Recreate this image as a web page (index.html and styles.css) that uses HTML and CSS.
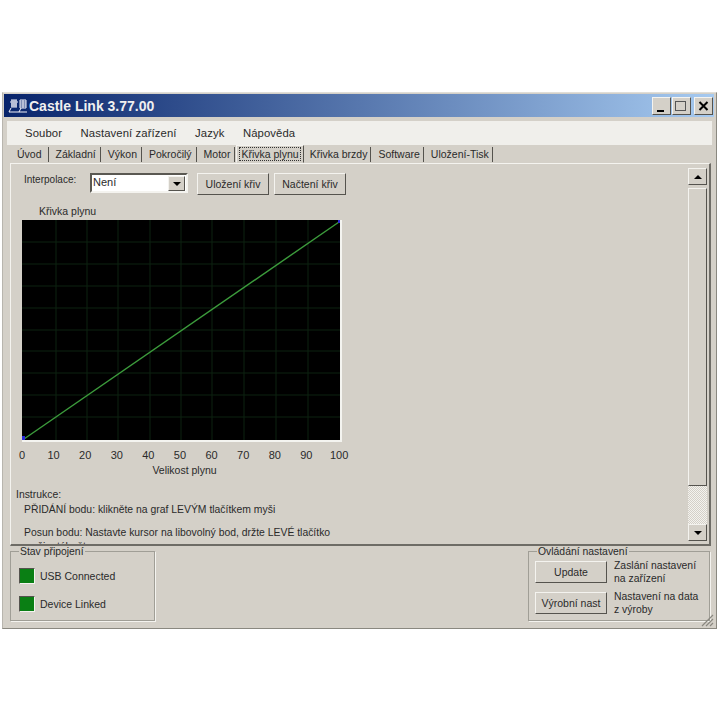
FILE: index.html
```html
<!DOCTYPE html>
<html>
<head>
    <title>Castle Link 3.77.00</title>
    <meta charset="UTF-8">
    <link rel="stylesheet" href="styles.css">
</head>
<body>
    <div class="window">
        <div class="titlebar">
            <svg class="app-icon" width="20" height="16" viewBox="0 0 20 16">
                <path d="M3 2h6M2 4h8M3 6h6M3 8h6M4 2v8M6 2v8M8 2v8M3 10L1 14M12 2h6v8h-6zM12 4h6M12 6h6M12 8h6M15 2v8M13 10l-2 4M1 14h18" stroke="#f2f2fa" stroke-width="1" fill="none"/>
            </svg>
            <span class="title-text">Castle Link 3.77.00</span>
            <div class="title-buttons">
                <button class="cap-btn"><span class="cap-min"></span></button>
                <button class="cap-btn"><span class="cap-max"></span></button>
                <button class="cap-btn">
                    <svg class="cap-x" width="11" height="10" viewBox="0 0 11 10">
                        <path d="M1.5 1l8 8M9.5 1l-8 8" stroke="#000" stroke-width="2" fill="none"/>
                    </svg>
                </button>
            </div>
        </div>

        <div class="menubar">
            <span class="menu-item">Soubor</span>
            <span class="menu-item">Nastavení zařízení</span>
            <span class="menu-item">Jazyk</span>
            <span class="menu-item">Nápověda</span>
        </div>

        <div class="tabs">
            <span class="tab">Úvod</span>
            <span class="tab">Základní</span>
            <span class="tab">Výkon</span>
            <span class="tab">Pokročilý</span>
            <span class="tab">Motor</span>
            <span class="tab active"><span class="tab-focus">Křivka plynu</span></span>
            <span class="tab">Křivka brzdy</span>
            <span class="tab">Software</span>
            <span class="tab">Uložení-Tisk</span>
        </div>

        <div class="panel">
            <div class="content">
                <div class="toolbar">
                    <span class="interp-label">Interpolace:</span>
                    <div class="combo">
                        <span class="combo-value">Není</span>
                        <span class="combo-arrow"><span class="arrow-down"></span></span>
                    </div>
                    <button class="btn tool-btn">Uložení křiv</button>
                    <button class="btn tool-btn">Načtení křiv</button>
                </div>

                <div class="chart-title">Křivka plynu</div>
                <svg class="chart" width="320" height="222" viewBox="0 0 320 222">
                    <rect width="320" height="222" fill="#000"/>
                    <path d="M34 0v220M65 0v220M96 0v220M128 0v220M159 0v220M190 0v220M222 0v220M254 0v220M286 0v220" stroke="#0c2210" fill="none"/>
                    <path d="M0 22h318M0 44h318M0 66h318M0 88h318M0 110h318M0 131h318M0 153h318M0 175h318M0 197h318" stroke="#0c2210" fill="none"/>
                    <path d="M2 219L317 2" stroke="#3c9c3c" stroke-width="1.4" fill="none"/>
                    <rect x="0" y="216" width="3" height="4" fill="#2a2ad8"/>
                    <rect x="316" y="0" width="3" height="3" fill="#2a2ad8"/>
                    <path d="M319 0V221H0" stroke="#f4f4f0" stroke-width="2" fill="none"/>
                </svg>
                <div class="axis">
                    <span>0</span><span>10</span><span>20</span><span>30</span><span>40</span><span>50</span><span>60</span><span>70</span><span>80</span><span>90</span><span>100</span>
                </div>
                <div class="axis-title">Velikost plynu</div>

                <div class="instructions">
                    <div class="instr-head">Instrukce:</div>
                    <div class="instr-line">PŘIDÁNÍ bodu: klikněte na graf LEVÝM tlačítkem myši</div>
                    <div class="instr-line instr-second">Posun bodu: Nastavte kursor na libovolný bod, držte LEVÉ tlačítko</div>
                    <div class="instr-line instr-cut">myši a táhněte</div>
                </div>
            </div>

            <div class="scrollbar">
                <button class="scroll-btn"><span class="arrow-up"></span></button>
                <div class="scroll-thumb"></div>
                <div class="scroll-track"></div>
                <button class="scroll-btn"><span class="arrow-down"></span></button>
            </div>
        </div>

        <div class="statusbar">
            <fieldset class="group group-status">
                <legend>Stav připojení</legend>
                <div class="led-row"><span class="led"></span>USB Connected</div>
                <div class="led-row"><span class="led"></span>Device Linked</div>
            </fieldset>

            <fieldset class="group group-settings">
                <legend>Ovládání nastavení</legend>
                <div class="set-row">
                    <button class="btn set-btn">Update</button>
                    <span class="set-text">Zaslání nastavení<br>na zařízení</span>
                </div>
                <div class="set-row">
                    <button class="btn set-btn">Výrobní nast</button>
                    <span class="set-text">Nastavení na data<br>z výroby</span>
                </div>
            </fieldset>
            <svg class="grip" width="14" height="14" viewBox="0 0 14 14">
                <path d="M13 2L2 13M13 6L6 13M13 10L10 13" stroke="#8a8880" stroke-width="1.2" fill="none"/>
            </svg>
        </div>
    </div>
</body>
</html>
```

FILE: styles.css
```css
:root {
    --face: #d4d0c8;
    --dark: #6e6c66;
    --light: #f4f3ef;
    --shadow: #55534e;
    --text: #2a2a2a;
}

* {
    margin: 0;
    padding: 0;
    box-sizing: border-box;
}

body {
    background: #fff;
    font-family: 'Liberation Sans', Arial, sans-serif;
    font-size: 11px;
    color: var(--text);
    height: 720px;
    overflow: hidden;
}

.window {
    position: relative;
    margin: 92px 0 0 2px;
    width: 715px;
    height: 537px;
    background: var(--face);
    border: 1px solid #b8b5ae;
    border-top-color: #e0ded8;
    border-right-color: #8a8880;
    border-bottom-color: #8a8880;
    padding: 1px 2px 0 1px;
}

.titlebar {
    height: 23px;
    display: flex;
    align-items: center;
    padding-left: 4px;
    background: linear-gradient(to right, #08246b, #a6caf0);
    color: #f0f0f0;
}

.app-icon {
    margin-right: 1px;
}

.title-text {
    font-size: 14px;
    font-weight: bold;
}

.title-buttons {
    margin-left: auto;
    margin-right: 1px;
    display: flex;
    gap: 1px;
}

.title-buttons .cap-btn:nth-child(2) {
    margin-right: 2px;
}

.cap-btn {
    width: 19px;
    height: 18px;
    background: var(--face);
    border: 1px solid;
    border-color: var(--light) var(--shadow) var(--shadow) var(--light);
    position: relative;
}

.cap-min {
    position: absolute;
    left: 4px;
    bottom: 2px;
    width: 7px;
    height: 2px;
    background: #000;
}

.cap-max {
    position: absolute;
    left: 2px;
    top: 3px;
    width: 11px;
    height: 10px;
    border: 1px solid #555;
}

.cap-x {
    position: absolute;
    left: 3px;
    top: 3px;
}

.menubar {
    margin: 4px 0 0 3px;
    width: 705px;
    height: 24px;
    background: #f0efeb;
    display: flex;
    align-items: center;
    padding-left: 18px;
    gap: 18.5px;
    font-size: 11.3px;
    letter-spacing: 0.1px;
}

.tabs {
    display: flex;
    height: 18px;
    margin-left: 6px;
    align-items: flex-end;
    font-size: 10.5px;
}

.tab {
    height: 15px;
    margin-bottom: 1px;
    padding: 1px 4px 0 7px;
    border-right: 1px solid var(--shadow);
    white-space: nowrap;
}

.tab:first-child {
    padding-right: 6px;
}

.tab.active {
    height: 18px;
    margin: 0 0 0 1px;
    padding: 1px 2px 0;
    background: var(--face);
    border: 1px solid;
    border-color: var(--light) var(--shadow) var(--face) var(--light);
}

.active ~ .tab {
    padding-right: 3px;
}

.tab.active + .tab {
    padding-left: 6px;
}

.tab-focus {
    display: block;
    padding: 0 1px;
    height: 14px;
    border: 1px dotted #333;
    line-height: 12px;
}

.panel {
    display: flex;
    height: 383px;
    margin: 0 3px 0 6px;
    border-top: 1px solid var(--light);
    border-left: 1px solid var(--light);
    border-right: 2px solid var(--dark);
    border-bottom: 2px solid var(--dark);
    overflow: hidden;
}

.content {
    flex: 1;
    overflow: hidden;
    padding-top: 9px;
}

.toolbar {
    display: flex;
    align-items: flex-start;
    padding-left: 13px;
}

.interp-label {
    width: 66px;
    font-size: 10px;
    line-height: 13px;
}

.combo {
    width: 98px;
    height: 20px;
    background: #fff;
    border: 2px solid;
    border-color: #5a5852 var(--light) var(--light) #5a5852;
    display: flex;
    justify-content: space-between;
    margin-right: 9px;
}

.combo-value {
    padding: 1px 0 0 1px;
}

.combo-arrow {
    width: 17px;
    height: 15px;
    margin: 1px;
    background: var(--face);
    border: 1px solid;
    border-color: var(--light) var(--shadow) var(--shadow) var(--light);
    display: flex;
    align-items: center;
    justify-content: center;
}

.arrow-down {
    display: block;
    width: 0;
    height: 0;
    border-left: 4px solid transparent;
    border-right: 4px solid transparent;
    border-top: 4px solid #000;
}

.arrow-up {
    display: block;
    width: 0;
    height: 0;
    border-left: 4px solid transparent;
    border-right: 4px solid transparent;
    border-bottom: 4px solid #000;
}

.btn {
    background: var(--face);
    border: 1px solid;
    border-color: var(--light) var(--shadow) var(--shadow) var(--light);
    font-family: inherit;
    font-size: 10.5px;
    color: var(--text);
}

.tool-btn {
    width: 72px;
    height: 22px;
    margin-right: 5px;
}

.chart-title {
    margin: 10px 0 0 28px;
    height: 13px;
    line-height: 13px;
    font-size: 10.5px;
}

.chart {
    display: block;
    margin: 2px 0 0 11px;
}

.axis {
    display: flex;
    justify-content: space-between;
    width: 332px;
    height: 13px;
    line-height: 13px;
    margin: 7px 0 0 3px;
}

.axis span {
    width: 16px;
    text-align: center;
}

.axis-title {
    width: 347px;
    text-align: center;
    height: 13px;
    line-height: 13px;
    margin-top: 2px;
    font-size: 10.5px;
}

.instructions {
    margin: 11px 0 0 5px;
    line-height: 14px;
    font-size: 10.4px;
}

.instr-line {
    margin: 1px 0 0 8px;
}

.instr-second {
    margin-top: 9px;
}

.instr-cut {
    margin-top: 0;
}

.scrollbar {
    width: 19px;
    margin-right: 2px;
    display: flex;
    flex-direction: column;
    flex-shrink: 0;
    padding: 4px 0 3px;
}

.scroll-btn {
    width: 19px;
    height: 17px;
    flex-shrink: 0;
    background: var(--face);
    border: 1px solid;
    border-color: var(--light) var(--shadow) var(--shadow) var(--light);
    display: flex;
    align-items: center;
    justify-content: center;
}

.scroll-thumb {
    flex: 1;
    margin-top: 3px;
    background: var(--face);
    border: 1px solid;
    border-color: var(--light) var(--shadow) var(--shadow) var(--light);
}

.scroll-track {
    height: 38px;
    background: repeating-conic-gradient(var(--light) 0 25%, #d4d0c8 0 50%) 0 0 / 2px 2px;
}

.statusbar {
    position: relative;
    height: 82px;
    display: flex;
    justify-content: space-between;
    padding: 0 4px 0 6px;
}

.group {
    border: 1px solid #a09e96;
    box-shadow: 1px 1px 0 var(--light);
    height: 75px;
}

.group legend {
    font-size: 10.4px;
    line-height: 11px;
    padding: 0 1px;
}

.group-status {
    width: 145px;
    padding: 11px 0 0 8px;
}

.group-status legend {
    margin-left: 0;
}

.led-row {
    display: flex;
    align-items: center;
    height: 16px;
    margin-bottom: 12px;
    gap: 5px;
    font-size: 10.5px;
}

.led {
    width: 16px;
    height: 16px;
    background: #0a7f14;
    border: 1px solid;
    border-color: var(--shadow) var(--light) var(--light) var(--shadow);
}

.group-settings {
    width: 182px;
    padding: 4px 0 0 6px;
}

.group-settings legend {
    margin-left: 2px;
}

.set-row {
    display: flex;
    gap: 7px;
    height: 31px;
}

.set-btn {
    width: 72px;
    height: 22px;
}

.set-text {
    font-size: 10.4px;
    line-height: 13px;
    margin-top: -2px;
}

.grip {
    position: absolute;
    right: 0;
    bottom: 1px;
}
```
